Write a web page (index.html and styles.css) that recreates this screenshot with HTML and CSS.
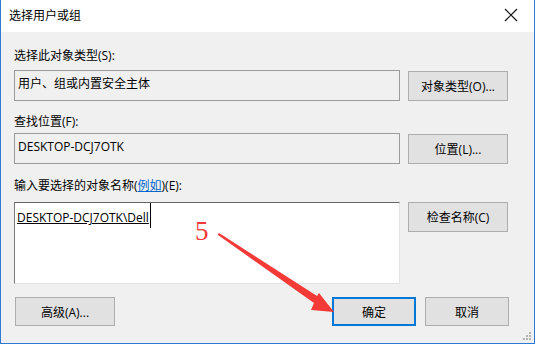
FILE: index.html
```html
<!DOCTYPE html>
<html lang="zh-CN">
<head>
  <meta charset="UTF-8">
  <title>选择用户或组</title>
  <link rel="stylesheet" href="styles.css">
</head>
<body>
  <div class="window">
    <div class="titlebar">
      <span class="title">选择用户或组</span>
      <svg class="close" width="14" height="14" viewBox="0 0 14 14">
        <path d="M1 1 L13 13 M13 1 L1 13" stroke="#111" stroke-width="1.2" fill="none"/>
      </svg>
    </div>
    <div class="panel">
      <div class="label label-first">选择此对象类型(S):</div>
      <div class="row">
        <div class="field readonly">用户、组或内置安全主体</div>
        <button class="btn">对象类型(O)...</button>
      </div>

      <div class="label label-second">查找位置(F):</div>
      <div class="row">
        <div class="field readonly">DESKTOP-DCJ7OTK</div>
        <button class="btn">位置(L)...</button>
      </div>

      <div class="label label-third">输入要选择的对象名称(<a href="#">例如</a>)(E):</div>
      <div class="row row-top">
        <div class="field names"><span class="entry">DESKTOP-DCJ7OTK\Dell</span><span class="caret"></span></div>
        <button class="btn">检查名称(C)</button>
      </div>

      <div class="footer">
        <button class="btn btn-wide">高级(A)...</button>
        <div class="actions">
          <button class="btn btn-small btn-default">确定</button>
          <button class="btn btn-small">取消</button>
        </div>
      </div>
      <svg class="grip" width="10" height="10" viewBox="0 0 10 10">
        <rect x="7" y="1" width="2" height="2" fill="#b5b5b5"/>
        <rect x="4" y="4" width="2" height="2" fill="#b5b5b5"/>
        <rect x="7" y="4" width="2" height="2" fill="#b5b5b5"/>
        <rect x="1" y="7" width="2" height="2" fill="#b5b5b5"/>
        <rect x="4" y="7" width="2" height="2" fill="#b5b5b5"/>
        <rect x="7" y="7" width="2" height="2" fill="#b5b5b5"/>
      </svg>
    </div>

    <!-- annotation drawn over the dialog -->
    <div class="step">5</div>
    <svg class="arrow" width="535" height="345" viewBox="0 0 535 345">
      <polygon points="218,234 219,233 317,296 319,293 334,312 311,310 314,303 218,235" fill="#f33a36"/>
    </svg>
  </div>
</body>
</html>
```

FILE: styles.css
```css
body {
  margin: 0;
  background: #ffffff;
  font-family: "Open Sans", "Noto Sans CJK SC", sans-serif;
  font-size: 12px;
  color: #000;
}

.window {
  position: relative;
  width: 535px;
  height: 344px;
  box-sizing: border-box;
  border: 1px solid #2b7bd5;
  border-top: none;
  display: flex;
  flex-direction: column;
}

.titlebar {
  height: 32px;
  flex-shrink: 0;
  background: #fff;
  display: flex;
  align-items: center;
  justify-content: space-between;
  padding: 0 16px 0 8px;
}

.title {
  font-size: 12px;
  padding-bottom: 2px;
}

.close {
  margin-top: -2px;
}

.panel {
  position: relative;
  flex: 1;
  background: #f0f0f0;
  padding: 0 25px 0 13px;
  display: flex;
  flex-direction: column;
}

.label {
  line-height: 16px;
  height: 16px;
}

.label-first {
  margin-top: 16px;
}

.label-second {
  margin-top: 13px;
}

.label-third {
  margin-top: 14px;
}

.label a {
  color: #0066cc;
  text-decoration: underline;
}

.row {
  display: flex;
  align-items: center;
  gap: 8px;
  margin-top: 6px;
}

.label-second + .row {
  margin-top: 3px;
}

.label-third + .row {
  margin-top: 8px;
}

.row-top {
  align-items: flex-start;
}

.field {
  width: 386px;
  height: 31px;
  box-sizing: border-box;
  padding: 5px 3px;
  line-height: 16px;
}

.readonly {
  border: 1px solid #9a9a9a;
  background: #f0f0f0;
}

.names {
  height: 82px;
  background: #fff;
  border-top: 1px solid #646464;
  border-left: 1px solid #7a7a7a;
  border-right: 1px solid #e3e3e3;
  border-bottom: 1px solid #e3e3e3;
  padding: 7px 2px;
  display: flex;
  align-items: flex-start;
}

.entry {
  text-decoration: underline;
  line-height: 16px;
}

.caret {
  width: 1px;
  height: 25px;
  margin-top: -7px;
  margin-left: 1px;
  background: #000;
}

.btn {
  width: 100px;
  height: 30px;
  box-sizing: border-box;
  background: #e1e1e1;
  border: 1px solid #adadad;
  font-family: "Open Sans", "Noto Sans CJK SC", sans-serif;
  font-size: 12px;
  color: #000;
  padding: 0;
  flex-shrink: 0;
}

.footer {
  display: flex;
  justify-content: space-between;
  margin-top: 13px;
  padding-left: 1px;
}

.actions {
  display: flex;
  gap: 9px;
}

.btn-small {
  width: 84px;
  height: 29px;
}

.btn-wide {
  height: 29px;
}

.btn-default {
  border: 2px solid #0078d7;
}

.grip {
  position: absolute;
  right: 2px;
  bottom: 2px;
}

.step {
  position: absolute;
  left: 194px;
  top: 215px;
  font-family: "Liberation Serif", serif;
  font-size: 27px;
  line-height: 32px;
  color: #f33a36;
}

.arrow {
  position: absolute;
  left: -1px;
  top: 0;
  pointer-events: none;
}
```
